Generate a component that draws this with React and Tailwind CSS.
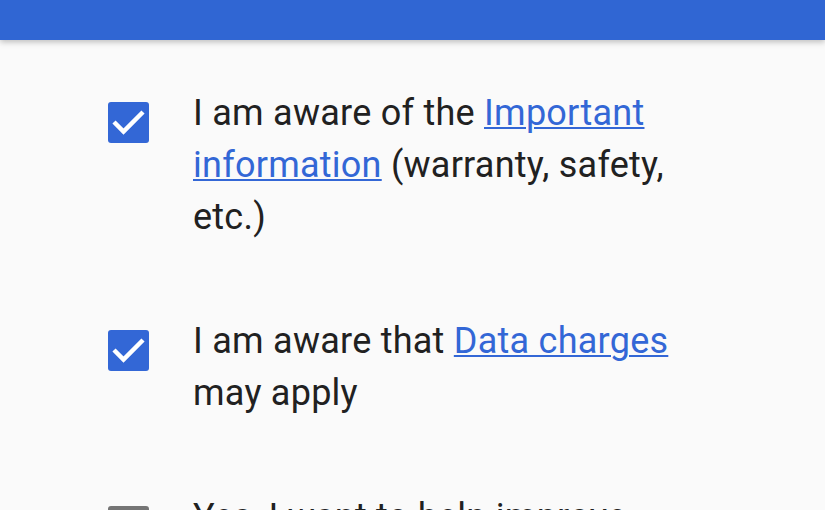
import React from "react";

const items = [
  {
    checked: true,
    content: (
      <>
        I am aware of the{" "}
        <a className="text-[#3367d6] underline decoration-2 underline-offset-[2px]">
          Important information
        </a>{" "}
        (warranty, safety, etc.)
      </>
    ),
  },
  {
    checked: true,
    content: (
      <>
        I am aware that{" "}
        <a className="text-[#3367d6] underline decoration-2 underline-offset-[2px]">
          Data charges
        </a>{" "}
        may apply
      </>
    ),
  },
  {
    checked: false,
    content: <>Yes, I want to help improve Android by sending usage data</>,
  },
];

// Material style checkbox
const Checkbox = ({ checked }) =>
  checked ? (
    <div className="w-[41px] h-[41px] rounded-[3px] bg-[#3367d6] shrink-0 mt-[15px]">
      <svg viewBox="0 0 41 41" className="w-full h-full">
        <polyline
          points="6,20 15.5,29.5 35,10"
          fill="none"
          stroke="#fff"
          strokeWidth="4.5"
        />
      </svg>
    </div>
  ) : (
    <div className="w-[41px] h-[41px] rounded-[3px] border-[5px] border-[#757575] shrink-0 mt-[15px]"></div>
  );

export default function App() {
  return (
    <div
      className="w-[825px] h-[510px] overflow-hidden bg-[#fafafa] text-[#212121]"
      style={{ fontFamily: "Roboto, 'Noto Sans', sans-serif" }}
    >
      <header className="h-10 bg-[#3066d3] shadow-[0_2px_6px_rgba(0,0,0,0.25)] relative z-10"></header>
      <main className="pt-[47px] pl-[108px] flex flex-col gap-[72px]">
        {items.map((item, i) => (
          <div key={i} className="flex gap-[44px]">
            <Checkbox checked={item.checked} />
            <p className="w-[500px] text-[36px] tracking-[0.25px] leading-[52px]">{item.content}</p>
          </div>
        ))}
      </main>
    </div>
  );
}
